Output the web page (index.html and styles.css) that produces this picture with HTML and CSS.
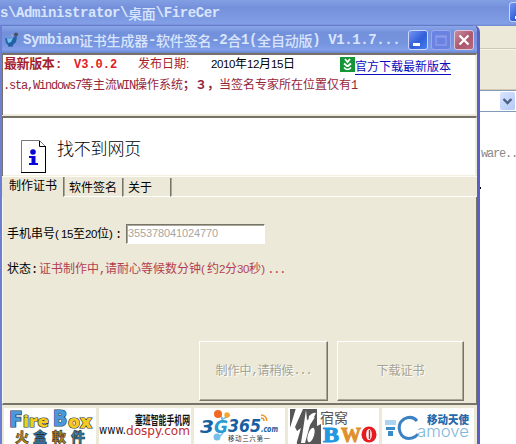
FILE: index.html
```html
<!DOCTYPE html>
<html lang="zh-CN">
<head>
<meta charset="utf-8">
<title>Symbian证书生成器</title>
<link rel="stylesheet" href="styles.css">
</head>
<body>
<div class="desktop">
  <section class="back-window">
    <header class="back-title"><span class="back-caption"><span class="t">s\Administrator\</span><span class="c">桌面</span><span class="t">\FireCer</span></span>
      <span class="ctl back-min"><svg width="22" height="20" viewBox="0 0 22 20"><path d="M5 13h7v3H5z" fill="#fff"/></svg></span>
    </header>
    <div class="menu-row"></div>
    <div class="tool-row"></div>
    <div class="address"><span class="drop"><svg width="15" height="18" viewBox="0 0 15 18"><path d="M3.5 7l4 4 4-4" fill="none" stroke="#4d6185" stroke-width="2.4"/></svg></span></div>
    <div class="back-page"><span class="m">.ware..</span><i class="speck"></i></div>
  </section>

  <section class="app">
    <header class="app-title">
      <svg class="app-icon" width="16" height="16" viewBox="0 0 16 16"><path d="M1 6l3 1 5-1 2-2 2 1-1 5-4 4H5L2 11z" fill="#2362a8"/><path d="M3 7l6-1-2 4-3 1z" fill="#72c0ed"/><circle cx="12" cy="2.500" r="2" fill="#4a5164"/><circle cx="8" cy="3.500" r="1" fill="#a3aec6"/><path d="M4 14h5" stroke="#254e8c"/></svg>
      <h1 class="caption"><span class="t">Symbian</span><span class="c">证书生成器</span><span class="t">-</span><span class="c">软件签名</span><span class="t">-2</span><span class="c">合</span><span class="t">1(</span><span class="c">全自动版</span><span class="t">) V1.1.7...</span></h1>
      <div class="controls">
        <span class="ctl"><svg width="18" height="18" viewBox="0 0 18 18"><path d="M4 12h7v3H4z" fill="#fff"/></svg></span>
        <span class="ctl off"><svg width="18" height="18" viewBox="0 0 18 18"><path d="M4 5h10v9H4zM4 6h10" fill="none" stroke="#8b9bea" stroke-width="1.4"/></svg></span>
        <span class="ctl close"><svg width="18" height="18" viewBox="0 0 18 18"><path d="M4.5 4.5l9 9M13.500 4.500l-9 9" stroke="#fff" stroke-width="2.2"/></svg></span>
      </div>
    </header>

    <div class="panel news">
      <div class="news-row">
        <span class="latest">最新版本<b class="colon">:</b></span>
        <span class="version">V3.0.2</span>
        <span class="released">发布日期:</span>
        <span class="date"><span class="d">2010</span>年<span class="d">12</span>月<span class="d">15</span>日</span>
        <a class="download"><svg width="15" height="15" viewBox="0 0 15 15"><path d="M0 0h15v15H0z" fill="#149537"/><path d="M5 2l2.500 3L10 2M4 6.500l3 2.500h1l3-2.500" fill="none" stroke="#fff" stroke-width="1.800"/><path d="M4 10.500q3.500 4 7 0" fill="none" stroke="#fff" stroke-width="1.600"/></svg><span>官方下载最新版本</span></a>
      </div>
      <p class="marquee"><span class="m">.sta,Windows7</span>等主流<span class="m">WIN</span>操作系统<b>；３，</b>当签名专家所在位置仅有<span class="m">1</span></p>
    </div>

    <div class="panel missing">
      <svg width="26" height="34" viewBox="0 0 26 34"><path d="M.5.500h18l6 6v26H.5z" fill="#fff" stroke="#777"/><path d="M0 32.500h25M24.500 6v27M18.500 1v5.500h6" fill="none" stroke="#000"/><circle cx="12" cy="12" r="2.800" fill="#0606d8"/><path d="M8 16h6.500v7H17v2H8v-2h2.500v-5H8z" fill="#0606d8"/></svg>
      <span>找不到网页</span>
    </div>

    <nav class="tabs"><span class="tab active">制作证书</span><span class="tab second">软件签名</span><span class="tab third">关于</span></nav>

    <main class="form">
      <div class="field"><label>手机串号<span class="d paren">(</span><span class="d">15</span>至<span class="d">20</span>位<span class="d paren">)</span><span class="m">:</span></label><span class="input">355378041024770</span></div>
      <div class="status">状态<span class="m">:</span><span class="state">证书制作中<span class="m">,</span>请耐心等候数分钟<span class="d paren">(</span>约<span class="d">2</span>分<span class="d">30</span>秒<span class="d paren">)</span><span class="m">...</span></span></div>
      <div class="buttons"><span class="button">制作中<span class="m">,</span>请稍候<span class="m">...</span></span><span class="button small">下载证书</span></div>
    </main>

    <footer class="links">
      <svg width="92" height="37" viewBox="0 0 92 37" class="logo"><g class="fire"><text x="5" y="19" font-size="22" textLength="13" lengthAdjust="spacingAndGlyphs" fill="#4898db">F</text><text x="19" y="19" font-size="16" textLength="26" lengthAdjust="spacingAndGlyphs" fill="#f4cb20">ire</text><text x="49" y="18" font-size="22" textLength="14" lengthAdjust="spacingAndGlyphs" fill="#4898db">B</text><text x="64" y="20" font-size="18" textLength="24" lengthAdjust="spacingAndGlyphs" fill="#f4cb20">ox</text></g><g class="zh heavy" font-size="14" stroke="#222" stroke-width=".5"><text x="11" y="34" fill="#b08718">火</text><text x="29" y="34" fill="#347cad">盒</text><text x="48" y="34" fill="#b08718">軟</text><text x="67" y="34" fill="#347cad">件</text></g></svg>
      <svg width="92" height="37" viewBox="0 0 92 37" class="logo"><text class="zh" font-weight="700" x="36" y="17" font-size="12" textLength="55" lengthAdjust="spacingAndGlyphs" fill="#111">塞班智能手机网</text><g class="pixel"><text x="0" y="26" font-size="12" textLength="27" lengthAdjust="spacingAndGlyphs" fill="#111">www.</text><text x="27" y="27" font-size="13" textLength="64" lengthAdjust="spacingAndGlyphs" fill="#bd2c30">dospy.com</text></g></svg>
      <svg width="91" height="37" viewBox="0 0 91 37" class="logo"><path d="M25 6l4 5 7-4M27 8l2 7M29 25l-4 4" fill="none" stroke="#78bce8" stroke-width="1.500"/><circle cx="24" cy="6" r="4" fill="#ef6a22"/><circle cx="33" cy="7" r="2.700" fill="#f4a729"/><circle cx="23" cy="29" r="3.500" fill="#75bfea"/><g class="round" fill="#17609f"><text x="6" y="25" font-size="17" textLength="14" lengthAdjust="spacingAndGlyphs">3</text><text x="20" y="25" font-size="18" textLength="14" lengthAdjust="spacingAndGlyphs" fill="#269bd4">G</text><text x="34" y="24" font-size="17" textLength="33" lengthAdjust="spacingAndGlyphs">365</text><text x="67" y="24" font-size="9" textLength="17" lengthAdjust="spacingAndGlyphs">.com</text></g><path d="M67 7q5 0 6 6M67 10q3 0 3 3" fill="none" stroke="#ed9424" stroke-width="1.500"/><text class="zh" x="34" y="33" font-size="6.500" textLength="42" fill="#333">移动三六第一</text></svg>
      <svg width="91" height="37" viewBox="0 0 91 37" class="logo"><path d="M2 1h27v17l4-2v20H9L2 18z" fill="#565656"/><path d="M8 0L2 20l1 17h5l5-17-4 3-2-4L15 1zM18 2l-5 33h4l5-18 5-8-8 3z" fill="#fff"/><ellipse cx="23" cy="27" rx="3" ry="7.500" transform="rotate(18 23 27)" fill="#fff"/><path d="M21 8q4-4 7-3l-4 8-4 2z" fill="#fff"/><text class="zh" x="32" y="15" font-size="14" textLength="28" lengthAdjust="spacingAndGlyphs" fill="#565656">宿窝</text><g class="black"><text x="35" y="34" font-size="21" textLength="16" lengthAdjust="spacingAndGlyphs" fill="#2397df" stroke="#2397df">B</text><text x="53" y="34" font-size="21" textLength="20" lengthAdjust="spacingAndGlyphs" fill="#df9029" stroke="#df9029">W</text></g><ellipse cx="81" cy="26.500" rx="7.500" ry="8" fill="#e51b20"/><ellipse cx="81" cy="26.500" rx="2.800" ry="5.500" fill="#fff"/><path d="M81.500 22v9" stroke="#e51b20" stroke-width="1.500"/></svg>
      <svg width="92" height="37" viewBox="0 0 92 37" class="logo"><path d="M3 12h11v5H3z" fill="#acd4f2"/><path d="M4 19h9v3H4zM6 23h5v5H6z" fill="#3b8bc6"/><path d="M35 13q-5-6-13-2-7 5-4 13 3 8 12 6 4-1 6-4" fill="none" stroke="#3c82c2" stroke-width="3"/><text x="35" y="29" class="thin" font-size="16" textLength="52" lengthAdjust="spacingAndGlyphs" fill="#7eb6dc">amove</text><text class="zh heavy" x="45" y="16" font-size="11" textLength="42" lengthAdjust="spacingAndGlyphs" fill="#2769a9">移动天使</text></svg>
    </footer>
  </section>
</div>
</body>
</html>
```

FILE: styles.css
```css
* { box-sizing: border-box; }
body { margin: 0; width: 516px; height: 444px; overflow: hidden; font: 12px/14px "Liberation Sans", "Noto Sans CJK SC", sans-serif; color: #000; }
svg { display: block; flex: none; }
.desktop { position: relative; width: 516px; height: 444px; overflow: hidden; background: #fff; }
.m { font-family: "Liberation Mono", monospace; font-size: 12px; letter-spacing: -1.2px; }
.d { font-size: 11.5px; letter-spacing: -.4px; }
.paren { letter-spacing: 2.170px; }

.back-window { position: absolute; inset: 0; display: flex; flex-direction: column; background: #fff; }
.back-title { height: 26px; flex: none; display: flex; justify-content: space-between; padding: 2px 0 0; overflow: hidden; background: linear-gradient(#829fe4, #7590db 30%, #7d9be3 75%, #829ee6 90%, #6e89d2); }
.back-caption, .caption { display: flex; margin: 0; color: #d9e5fd; line-height: 22px; font-weight: bold; white-space: pre; }
.t { font-family: "Liberation Mono", monospace; font-size: 14px; letter-spacing: -.4px; }
.c { font-family: "Noto Sans CJK SC", sans-serif; font-size: 14px; letter-spacing: -.2px; font-weight: 500; }
.back-caption .t { letter-spacing: -.4px; }
.ctl { width: 20px; height: 20px; flex: none; border: 1px solid #cdd7fa; border-radius: 3px; background: linear-gradient(135deg, #7494f4, #315fd9 55%, #477ef0); overflow: hidden; }
.back-min { width: 22px; margin-right: -15px; }
.menu-row { height: 23px; flex: none; background: #ece9d8; border-bottom: 1px solid #cbc8b8; }
.tool-row { height: 41px; flex: none; background: #ece9d8; border-top: 1px solid #f8f5e8; border-bottom: 1px solid #dac8b1; }
.address { height: 22px; flex: none; display: flex; justify-content: flex-end; padding: 1px 1px 1px 0; border: solid #7f9db9; border-width: 1px 0; background: #fff; }
.drop { width: 15px; height: 18px; border-radius: 2px; background: linear-gradient(135deg, #d8e4fe, #b4c9f6); }
.back-page { display: flex; flex-direction: column; padding: 35px 0 0 475px; color: #8a8a8a; }
.speck { width: 2px; height: 2px; margin: 26px 0 0 4px; background: #000; }

.app { position: absolute; left: 0; top: 25px; width: 480px; height: 419px; display: flex; flex-direction: column; background: #ece9d8; border: solid #6d7fd2; border-width: 0 3px 0 2px; border-right-color: #595fc4; border-radius: 0 7px 0 0; overflow: hidden; }
.app-title { height: 28px; flex: none; display: flex; align-items: center; margin: 0 -3px 0 -2px; padding: 1px 5px 0 4px; border-top: 1px solid #647cc8; background: linear-gradient(#8aa5e8, #7390db 25%, #7695df 65%, #829fe8 88%, #6783ce); }
.caption { margin-left: 3px; width: 385px; }
.controls { display: flex; gap: 3px; }
.off { background: #6a83e2; border-color: #98a9ec; }
.close { background: linear-gradient(135deg, #c58b9f, #ab586d 55%, #b5667c); border-color: #dec4d8; }

.panel { flex: none; background: #fff; border: solid #777267; border-width: 2px 0 0 1px; border-right: 1px solid #ece9d8; box-shadow: inset -1px -1px #f2efe1; }
.news { height: 62px; margin-bottom: 1px; }
.news-row { display: grid; grid-template-columns: 70px 64px 73px 129px 1fr; height: 20px; padding-left: 1px; align-items: start; padding-top: 2px; color: #a51e2b; white-space: nowrap; }
.latest { font-size: 13px; font-weight: bold; letter-spacing: -.4px; }
.colon { margin-left: 2px; }
.version { font: bold 12px/17px "Liberation Mono", monospace; color: #e12028; }
.date { color: #000; }
.download { display: flex; color: #0b0bc0; }
.download span { height: 15px; margin-top: 3px; border-bottom: 1px solid #0b0bc0; }
.marquee { margin: 3px 0 0; padding-left: 0; color: #94263a; white-space: nowrap; }
.missing { height: 60px; display: flex; padding: 22px 0 0 18px; }
.missing svg { margin-right: 10px; }
.missing span { font-size: 17px; line-height: 20px; letter-spacing: -.2px; font-weight: 300; }

.tabs { height: 21px; flex: none; display: flex; align-items: stretch; border-top: 1px solid #fffdf4; }
.tab { border-right: 1px solid #77746a; border-bottom: 1px solid #fff; box-shadow: 1px 0 #aaa797; padding: 4px 0 0 5px; white-space: nowrap; }
.tab.active { width: 62px; padding: 2px 0 0 7px; border-bottom-color: #ece9d8; }
.tab.second { width: 59px; margin-top: 1px; padding-top: 3px; }
.tab.third { width: 48px; margin-top: 1px; padding-top: 3px; }
.tabs::after { content: ""; flex: 1; border-bottom: 1px solid #fff; }

.form { height: 208px; flex: none; padding: 27px 0 0 4px; border-left: 1px solid #faf8ed; border-right: 1px solid #77746a; border-bottom: 2px solid #77746a; }
.field { display: flex; height: 20px; align-items: center; }
.field label { width: 119px; white-space: nowrap; }
.input { width: 139px; height: 20px; padding: 1px 0 0 1px; background: #fff; border: 1px solid; border-color: #77746a #fff #fff #77746a; box-shadow: inset 1px 1px #aaa797; color: #a7a69e; font-size: 11px; line-height: 15px; letter-spacing: -.12px; }
.status { margin-top: 18px; line-height: 14px; white-space: nowrap; }
.state { color: #b43e50; margin-left: 2px; }
.buttons { display: flex; gap: 9px; margin: 64px 0 0 192px; }
.button { display: flex; width: 129px; height: 60px; align-items: center; justify-content: center; color: #a5a291; text-shadow: 1px 1px #fff; border: 1px solid; border-color: #fff #77746a #77746a #fff; box-shadow: inset -1px -1px #aaa797; white-space: nowrap; }
.button.small { width: 127px; }
.links { display: flex; gap: 3px; padding: 3px 0 0 2px; }
.logo { background: #fff; }
.zh { font-family: "Noto Sans CJK SC", sans-serif; }
.heavy { font-weight: 900; }
.fire { font-family: "Open Sans", sans-serif; font-weight: 800; stroke: #2b3444; stroke-width: 1.200px; paint-order: stroke; }
.pixel { font-family: "DejaVu Sans", sans-serif; font-weight: 400; }
.round { font-family: "DejaVu Sans", sans-serif; font-weight: 700; font-style: italic; }
.black { font-family: "Liberation Serif", serif; font-weight: 700; stroke-width: 1px; }
.thin { font-family: Inter, sans-serif; font-weight: 300; }
```
